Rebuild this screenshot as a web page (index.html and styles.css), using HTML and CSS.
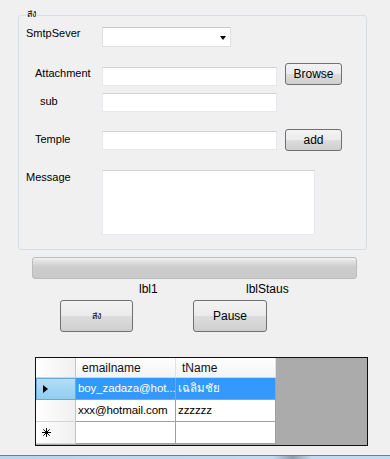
FILE: index.html
```html
<!DOCTYPE html>
<html lang="th">
<head>
    <meta charset="UTF-8">
    <meta name="viewport" content="width=device-width, initial-scale=1.0">
    <title>ส่ง</title>
    <link rel="stylesheet" href="styles.css">
</head>
<body>
    <div class="group">
        <span class="group-title">ส่ง</span>
        <div class="row row-smtp">
            <label class="lbl lbl-smtp">SmtpSever</label>
            <div class="combo"><span class="combo-arrow"></span></div>
        </div>
        <div class="row row-attach">
            <label class="lbl lbl-attach">Attachment</label>
            <div class="textbox tb-long tb-attach"></div>
            <button class="btn btn-side">Browse</button>
        </div>
        <div class="row row-sub">
            <label class="lbl lbl-sub">sub</label>
            <div class="textbox tb-long"></div>
        </div>
        <div class="row row-temple">
            <label class="lbl lbl-temple">Temple</label>
            <div class="textbox tb-long tb-temple"></div>
            <button class="btn btn-side">add</button>
        </div>
        <div class="row row-message">
            <label class="lbl lbl-message">Message</label>
            <div class="textbox tb-message"></div>
        </div>
    </div>

    <div class="progress"></div>

    <div class="status-row">
        <span class="lbl1">lbl1</span>
        <span class="lbl-status">lblStaus</span>
    </div>

    <div class="action-row">
        <button class="btn btn-send">ส่ง</button>
        <button class="btn btn-pause">Pause</button>
    </div>

    <div class="grid">
        <div class="grid-table">
            <div class="grid-row head">
                <div class="cell rowhead"></div>
                <div class="cell colhead">emailname</div>
                <div class="cell colhead">tName</div>
            </div>
            <div class="grid-row selected">
                <div class="cell rowhead current"><span class="arrow"></span></div>
                <div class="cell data">boy_zadaza@hot...</div>
                <div class="cell data">เฉลิมชัย</div>
            </div>
            <div class="grid-row">
                <div class="cell rowhead"></div>
                <div class="cell data">xxx@hotmail.com</div>
                <div class="cell data">zzzzzz</div>
            </div>
            <div class="grid-row">
                <div class="cell rowhead newrow">
                    <svg width="9" height="9" viewBox="0 0 9 9">
                        <path d="M4.5 0V9M0 4.5H9M1.3 1.3L7.7 7.7M7.7 1.3L1.3 7.7" stroke="#000" stroke-width="1"/>
                    </svg>
                </div>
                <div class="cell data"></div>
                <div class="cell data"></div>
            </div>
        </div>
    </div>

    <div class="taskbar"></div>
</body>
</html>
```

FILE: styles.css
```css
body {
    margin: 0;
    height: 459px;
    overflow: hidden;
    background-color: #f0f0f0;
    font-family: "Liberation Sans", Tahoma, sans-serif;
    font-size: 11px;
    line-height: 13px;
    color: #000;
}
.group {
    position: relative;
    margin: 15px 0 0 18px;
    width: 347px;
    height: 233px;
    border: 1px solid #d5dfe5;
    border-radius: 3px;
}
.group-title {
    position: absolute;
    top: -8px;
    left: 7px;
    padding: 0 1px;
    background-color: #f0f0f0;
    font-size: 9px;
}
.row {
    display: flex;
    align-items: flex-start;
}
.row-smtp { margin-top: 11px; }
.row-attach { margin-top: 16px; }
.row-sub { margin-top: 7px; }
.row-temple { margin-top: 17px; }
.row-message { margin-top: 19px; }
.lbl {
    box-sizing: border-box;
    width: 83px;
    flex-shrink: 0;
}
.lbl-smtp { padding-left: 7px; }
.lbl-attach { padding: 4px 0 0 16px; }
.lbl-sub { padding: 2px 0 0 21px; }
.lbl-temple { padding: 4px 0 0 16px; }
.lbl-message { padding: 1px 0 0 7px; }
.combo {
    position: relative;
    box-sizing: border-box;
    width: 129px;
    height: 20px;
    background-color: #fff;
    border: 1px solid #dcdfe4;
    border-top-color: #c5c9cf;
}
.combo-arrow {
    position: absolute;
    right: 4px;
    top: 8px;
    border-left: 3px solid transparent;
    border-right: 3px solid transparent;
    border-top: 4px solid #000;
}
.textbox {
    box-sizing: border-box;
    background-color: #fff;
    border: 1px solid #e3e9ef;
    border-top-color: #cfd3d8;
}
.tb-long {
    width: 175px;
    height: 19px;
}
.tb-attach { margin-top: 4px; }
.tb-temple { margin-top: 2px; }
.tb-message {
    width: 213px;
    height: 65px;
}
.btn {
    box-sizing: border-box;
    border: 1px solid #707070;
    border-radius: 3px;
    background: linear-gradient(#f2f2f2 0%, #ebebeb 50%, #dddddd 50%, #cfcfcf 100%);
    font-family: "Liberation Sans", Tahoma, sans-serif;
    font-size: 12px;
    color: #000;
    padding: 0;
}
.btn-side {
    width: 57px;
    height: 22px;
    margin-left: 8px;
}
.progress {
    box-sizing: border-box;
    margin: 7px 0 0 32px;
    width: 325px;
    height: 22px;
    border: 1px solid #bcbcbc;
    border-radius: 3px;
    background: linear-gradient(#f2f2f2 0%, #dedede 20%, #cdcdcd 45%, #c9c9c9 100%);
}
.status-row {
    display: flex;
    margin-top: 4px;
    padding-left: 139px;
    font-size: 12px;
}
.lbl1 { width: 107px; }
.action-row {
    display: flex;
    margin-top: 4px;
    padding-left: 60px;
}
.btn-send {
    width: 73px;
    height: 32px;
    font-size: 9px;
}
.btn-pause {
    width: 74px;
    height: 32px;
    margin-left: 60px;
}
.grid {
    box-sizing: border-box;
    margin: 25px 0 0 35px;
    width: 333px;
    height: 89px;
    border: 1px solid #101010;
    background-color: #ababab;
}
.grid-table {
    width: 240px;
}
.grid-row {
    display: flex;
    height: 22px;
}
.grid-row.head {
    height: 20px;
}
.cell {
    box-sizing: border-box;
    border-right: 1px solid #a0a0a0;
    border-bottom: 1px solid #a0a0a0;
    background-color: #fff;
    padding: 4px 0 0 3px;
    white-space: nowrap;
    overflow: hidden;
}
.cell.data {
    width: 100px;
    padding-left: 2px;
    font-size: 11.5px;
    letter-spacing: -0.1px;
}
.rowhead {
    width: 40px;
    background: linear-gradient(to right, #ffffff, #f0f0f0);
    border-right-color: #c5c5c5;
    border-bottom-color: #d5d5d5;
}
.colhead {
    width: 100px;
    padding-left: 6px;
    background: linear-gradient(#ffffff, #f3f3f3);
    border-right-color: #e2e2e2;
    border-bottom-color: #d5d5d5;
    font-size: 12px;
    color: #111;
}
.selected .cell.data {
    background-color: #3399ff;
    color: #fff;
}
.rowhead.current {
    position: relative;
    background: linear-gradient(#b4def6, #8fcdf0);
    border: 1px solid #6aa9d0;
}
.arrow {
    position: absolute;
    left: 6px;
    top: 6px;
    border-top: 4px solid transparent;
    border-bottom: 4px solid transparent;
    border-left: 5px solid #000;
}
.newrow {
    padding: 6px 0 0 6px;
    line-height: 0;
}
.taskbar {
    margin-top: 9px;
    height: 4px;
    border-top: 1px solid #6e7f90;
    background: linear-gradient(to right, #bcd4ea 0%, #c3daef 70%, #8f9fae 75%, #c3daef 80%, #c3daef 100%);
}
```
